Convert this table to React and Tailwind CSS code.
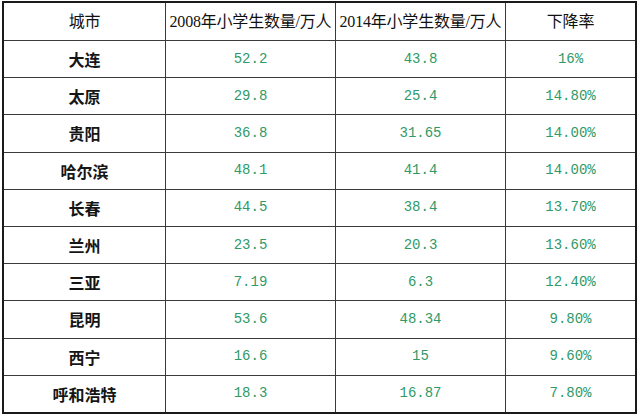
import React from "react";

const rows = [
  ["大连", "52.2", "43.8", "16%"],
  ["太原", "29.8", "25.4", "14.80%"],
  ["贵阳", "36.8", "31.65", "14.00%"],
  ["哈尔滨", "48.1", "41.4", "14.00%"],
  ["长春", "44.5", "38.4", "13.70%"],
  ["兰州", "23.5", "20.3", "13.60%"],
  ["三亚", "7.19", "6.3", "12.40%"],
  ["昆明", "53.6", "48.34", "9.80%"],
  ["西宁", "16.6", "15", "9.60%"],
  ["呼和浩特", "18.3", "16.87", "7.80%"],
];

const headers = ["城市", "2008年小学生数量/万人", "2014年小学生数量/万人", "下降率"];

export default function App() {
  return (
    <div className="w-[640px] h-[416px] bg-white pt-[1px] pl-[2px]">
      <div className="w-[635px] h-[413px] border-2 border-[#1a1a1a] bg-[#3a3a3a] grid grid-cols-[161px_169px_169px_1fr] grid-rows-[37px_repeat(10,1fr)] gap-px">
        {headers.map((h, i) => (
          <div
            key={h + i}
            className="bg-white flex items-center justify-center text-[16px] text-[#111] whitespace-nowrap tracking-[-0.2px] font-['Liberation_Serif','Noto_Sans_CJK_SC',serif]"
          >
            {h}
          </div>
        ))}
        {rows.map((r) => (
          <React.Fragment key={r[0]}>
            <div className="bg-white flex items-center justify-center text-[16px] font-bold text-[#151515] font-['Noto_Sans_CJK_SC',sans-serif]">
              {r[0]}
            </div>
            {r.slice(1).map((v, j) => (
              <div
                key={j}
                className="bg-white flex items-center justify-center text-[14px] text-[#2f9a68] font-['Liberation_Mono',monospace]"
              >
                {v}
              </div>
            ))}
          </React.Fragment>
        ))}
      </div>
    </div>
  );
}
